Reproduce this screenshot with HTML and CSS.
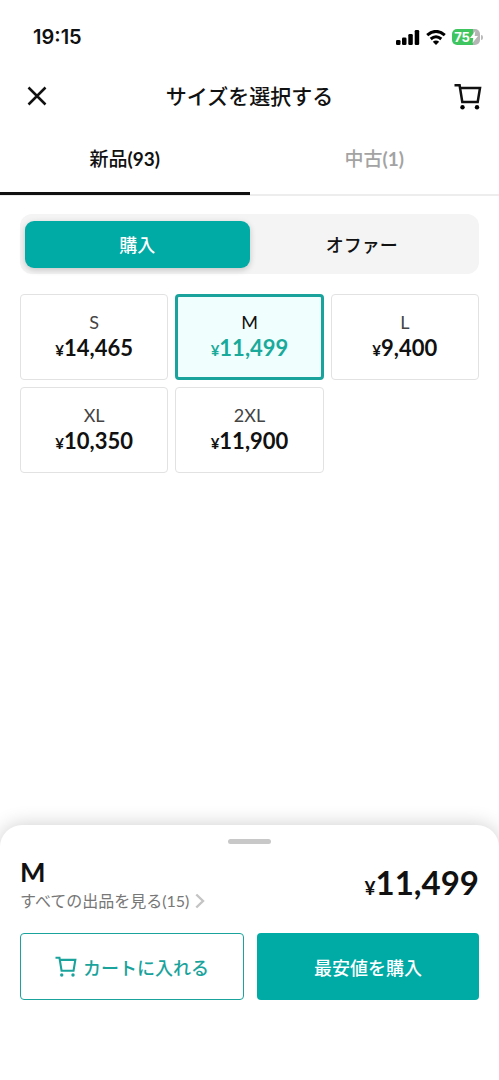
FILE: index.html
```html
<!DOCTYPE html>
<html lang="ja">
<head>
<meta charset="utf-8">
<meta name="viewport" content="width=device-width, initial-scale=1">
<title>サイズを選択する</title>
<link rel="stylesheet" href="styles.css">
</head>
<body>
<div class="status">
  <span class="clock">19:15</span>
  <div class="status-icons">
    <svg width="24" height="15" viewBox="0 0 24 15" aria-hidden="true">
      <rect x="0" y="10" width="4.500" height="5" rx="1.300"/>
      <rect x="6" y="7.500" width="4.500" height="7.500" rx="1.300"/>
      <rect x="12.300" y="4" width="4.500" height="11" rx="1.300"/>
      <rect x="18.700" y="0" width="4.500" height="15" rx="1.300"/>
    </svg>
    <svg width="20" height="15" viewBox="0 0 20 15" aria-hidden="true">
      <path d="M1.200 5.200Q10 -2.400 18.800 5.200M4.700 9Q10 4.500 15.300 9" fill="none" stroke="#000" stroke-width="3"/>
      <path d="M6.800 11.800Q10 9 13.200 11.800L10 14.900Z"/>
    </svg>
    <div class="battery">
      <div class="battery-body"><span>75</span><svg width="8" height="12" viewBox="0 0 8 12" aria-hidden="true"><path d="M5.300 0L0 6.900H3.300L2.500 12L8 4.900H4.700Z" fill="#fff"/></svg></div>
      <i class="battery-tip"></i>
    </div>
  </div>
</div>
<header class="header">
  <button class="icon-btn close" type="button" aria-label="閉じる">
    <svg width="20" height="20" viewBox="0 0 20 20" aria-hidden="true"><path d="M1.500 1.500L18.500 18.500M18.500 1.500L1.500 18.500" fill="none" stroke="#111" stroke-width="2.500"/></svg>
  </button>
  <h1 class="title">サイズを選択する</h1>
  <button class="icon-btn cart" type="button" aria-label="カート">
    <svg width="28" height="27" viewBox="0 0 28 27" aria-hidden="true"><path d="M0.500 2.200H5.600L8.300 19H23.700L26 5H6" fill="none" stroke="#111" stroke-width="2.500"/><circle cx="8.500" cy="24.300" r="2.200"/><circle cx="23" cy="24.300" r="2.200"/></svg>
  </button>
</header>
<nav class="tabs" role="tablist">
  <button class="tab active" type="button" role="tab" aria-selected="true">新品<span class="count">(93)</span></button>
  <button class="tab" type="button" role="tab" aria-selected="false">中古<span class="count">(1)</span></button>
</nav>
<main class="content">
  <div class="segment">
    <button class="seg active" type="button" aria-pressed="true">購入</button>
    <button class="seg" type="button" aria-pressed="false">オファー</button>
  </div>
  <div class="sizes">
    <button class="size" type="button"><span class="name">S</span><span class="price"><small>¥</small>14,465</span></button>
    <button class="size selected" type="button"><span class="name">M</span><span class="price"><small>¥</small>11,499</span></button>
    <button class="size" type="button"><span class="name">L</span><span class="price"><small>¥</small>9,400</span></button>
    <button class="size" type="button"><span class="name">XL</span><span class="price"><small>¥</small>10,350</span></button>
    <button class="size" type="button"><span class="name">2XL</span><span class="price"><small>¥</small>11,900</span></button>
  </div>
</main>
<section class="sheet">
  <div class="handle"></div>
  <div class="summary">
    <div>
      <h2 class="chosen">M</h2>
      <a class="all" href="#">すべての出品を見る(15)<svg width="10" height="16" viewBox="0 0 10 16" aria-hidden="true"><path d="M1.300 1.500L8 8L1.300 14.500" fill="none" stroke="#c4c4c4" stroke-width="2.400"/></svg></a>
    </div>
    <p class="total"><small>¥</small>11,499</p>
  </div>
  <div class="actions">
    <button class="action outline" type="button">
      <svg width="22" height="21" viewBox="0 0 28 27" aria-hidden="true"><path d="M0.500 2.200H5.600L8.300 19H23.700L26 5H6" fill="none" stroke="currentColor" stroke-width="2.700"/><circle cx="8.500" cy="24.500" r="2.200" fill="currentColor"/><circle cx="23" cy="24.500" r="2.200" fill="currentColor"/></svg>
      カートに入れる
    </button>
    <button class="action solid" type="button">最安値を購入</button>
  </div>
</section>
</body>
</html>
```
FILE: styles.css
```css
* { box-sizing: border-box; }
body {
  margin: 0;
  min-height: 100vh;
  display: flex;
  flex-direction: column;
  background: #fff;
  color: #111;
  font-family: Lato, "Noto Sans CJK JP", sans-serif;
}
button {
  margin: 0;
  padding: 0;
  border: 0;
  background: none;
  color: inherit;
  font: inherit;
  cursor: pointer;
}
h1, h2, p { margin: 0; }
svg { display: block; flex: none; }

.status {
  display: flex;
  justify-content: space-between;
  align-items: center;
  height: 56px;
  padding: 18px 16px 0 33px;
}
.clock { font: 600 20px/24px Inter, sans-serif; }
.status-icons { display: flex; align-items: center; gap: 6px; }
.battery { display: flex; align-items: center; gap: 1px; }
.battery-body {
  display: flex;
  align-items: center;
  justify-content: center;
  width: 28px;
  height: 16px;
  border-radius: 5px;
  background: linear-gradient(90deg, #3fc55f 75%, #b5b5b5 75%);
  color: #fff;
  font: 700 13px/16px Inter, sans-serif;
}
.battery-tip { width: 2px; height: 5px; border-radius: 0 2px 2px 0; background: #bbb; }

.header {
  display: grid;
  grid-template-columns: 40px 1fr 40px;
  align-items: center;
  height: 80px;
  padding: 0 17px 0 27px;
}
.icon-btn { display: flex; height: 40px; align-items: center; }
.cart { justify-content: flex-end; }
.title {
  padding-right: 10px;
  text-align: center;
  font-size: 21px;
  font-weight: 500;
  line-height: 32px;
}

.tabs { display: flex; height: 60px; border-bottom: 2px solid #ededed; }
.tab {
  flex: 1;
  height: 60px;
  padding-bottom: 14px;
  border-bottom: 3px solid transparent;
  color: #a3a3a3;
  font-size: 19px;
  font-weight: 500;
}
.count { font-weight: 700; }
.tab.active { height: 59px; padding-bottom: 13px; border-color: #111; color: #111; }

.content { padding: 18px 20px 32px; }
.segment {
  display: flex;
  height: 60px;
  padding: 7px 5px 6px;
  border-radius: 12px;
  background: #f4f4f4;
}
.seg { flex: 1; padding-bottom: 2px; border-radius: 9px; font-size: 18px; font-weight: 500; }
.seg.active {
  background: #00aaa5;
  color: #fff;
  box-shadow: 0 2px 6px rgba(0, 0, 0, 0.2);
}
.sizes {
  display: grid;
  grid-template-columns: repeat(3, 1fr);
  gap: 7px;
  margin-top: 20px;
}
.size {
  display: flex;
  flex-direction: column;
  align-items: center;
  justify-content: center;
  height: 86px;
  border: 1px solid #e2e2e2;
  border-radius: 4px;
}
.name { color: #444; font-size: 18px; line-height: 24px; }
.price { font-size: 22px; font-weight: 700; line-height: 28px; }
.price small { font-size: 15px; }
.size.selected { border: 3px solid #1aa39c; background: #f0fffe; }
.selected .name { color: #111; }
.selected .price { color: #1aaa9b; }

.sheet {
  margin-top: auto;
  padding: 14px 20px 80px;
  border-radius: 22px 22px 0 0;
  background: #fff;
  box-shadow: 0 0 20px rgba(0, 0, 0, 0.2);
}
.handle { width: 43px; height: 5px; margin: 0 auto; border-radius: 3px; background: #c8c8c8; }
.summary {
  display: flex;
  align-items: center;
  justify-content: space-between;
  padding: 12px 0 20px;
}
.chosen { font-size: 27px; font-weight: 700; line-height: 32px; }
.all {
  display: flex;
  align-items: center;
  gap: 6px;
  color: #777;
  font-size: 16px;
  line-height: 25px;
  text-decoration: none;
}
.total { font-size: 33px; font-weight: 700; line-height: 40px; }
.total small { font-size: 19px; }
.actions { display: flex; gap: 13px; }
.action {
  display: flex;
  flex: 1;
  align-items: center;
  justify-content: center;
  gap: 6px;
  height: 67px;
  border-radius: 4px;
  font-size: 18px;
  font-weight: 500;
}
.outline { border: 1px solid #1aa39c; color: #1aa39c; }
.solid { background: #00aaa5; color: #fff; }
```
